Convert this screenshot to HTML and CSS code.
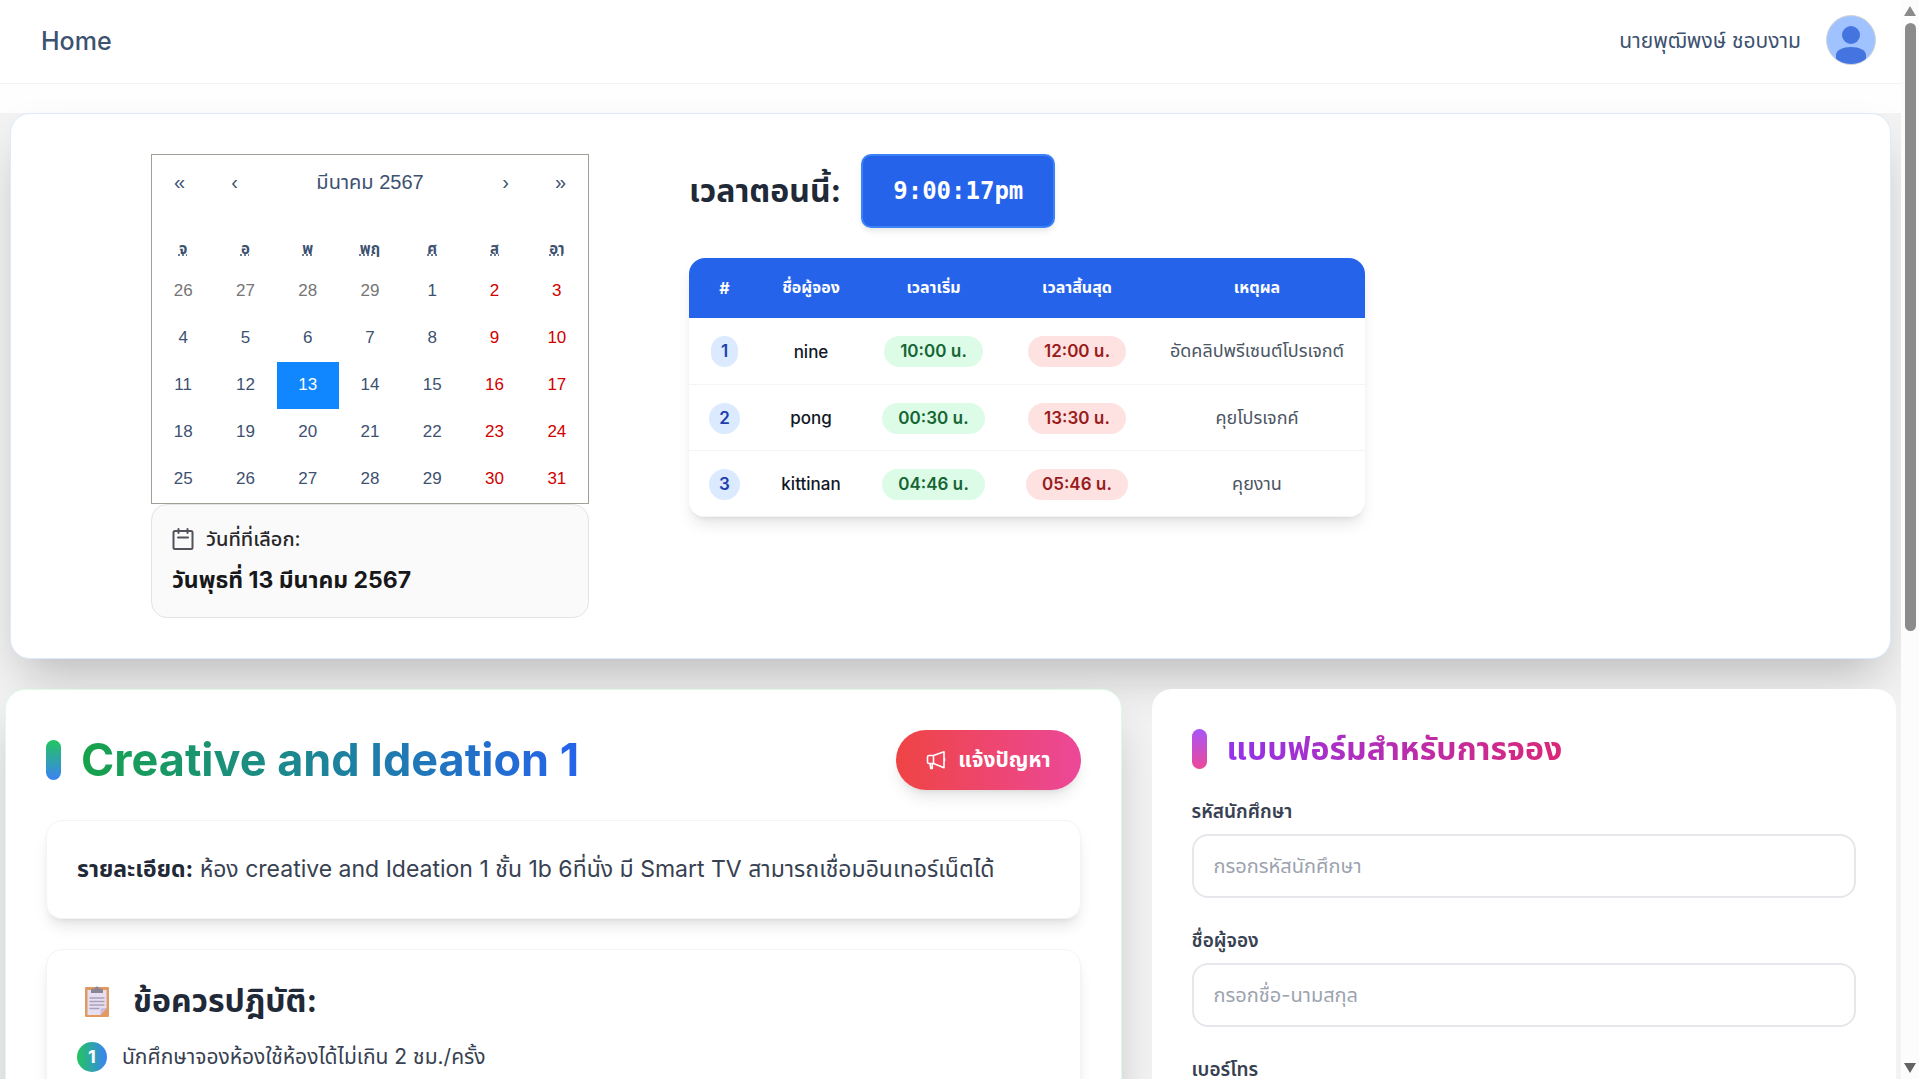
FILE: index.html
```html
<!DOCTYPE html>
<html lang="th">
<head>
<meta charset="utf-8">
<title>Home</title>
<link rel="stylesheet" href="styles.css">
</head>
<body>
<div class="page">
  <div class="top">
    <header class="topbar">
      <h1 class="topbar-title">Home</h1>
      <div class="user">
        <span class="user-name">นายพุฒิพงษ์ ชอบงาม</span>
        <svg class="avatar" viewBox="0 0 50 50" aria-hidden="true">
          <clipPath id="avatar-clip"><circle cx="25" cy="25" r="24"/></clipPath>
          <circle cx="25" cy="25" r="24.5" fill="#a0c3ff" stroke="#d4d4d4"/>
          <g fill="#4374e0" clip-path="url(#avatar-clip)">
            <circle cx="25" cy="20" r="9"/>
            <path d="M10 50V40c0-5 7-8 15-8s15 3 15 8v10z"/>
          </g>
        </svg>
      </div>
    </header>
  </div>

  <section class="schedule">
    <div class="date-col">
      <div class="calendar">
        <div class="cal-nav">
          <button type="button">«</button>
          <button type="button">‹</button>
          <button type="button" class="cal-label">มีนาคม 2567</button>
          <button type="button">›</button>
          <button type="button">»</button>
        </div>
        <table class="cal-grid">
          <thead><tr>
            <th><abbr title="วันจันทร์">จ</abbr></th><th><abbr title="วันอังคาร">อ</abbr></th><th><abbr title="วันพุธ">พ</abbr></th><th><abbr title="วันพฤหัสบดี">พฤ</abbr></th><th><abbr title="วันศุกร์">ศ</abbr></th><th><abbr title="วันเสาร์">ส</abbr></th><th><abbr title="วันอาทิตย์">อา</abbr></th>
          </tr></thead>
          <tbody>
            <tr><td class="other">26</td><td class="other">27</td><td class="other">28</td><td class="other">29</td><td>1</td><td class="weekend">2</td><td class="weekend">3</td></tr>
            <tr><td>4</td><td>5</td><td>6</td><td>7</td><td>8</td><td class="weekend">9</td><td class="weekend">10</td></tr>
            <tr><td>11</td><td>12</td><td class="active">13</td><td>14</td><td>15</td><td class="weekend">16</td><td class="weekend">17</td></tr>
            <tr><td>18</td><td>19</td><td>20</td><td>21</td><td>22</td><td class="weekend">23</td><td class="weekend">24</td></tr>
            <tr><td>25</td><td>26</td><td>27</td><td>28</td><td>29</td><td class="weekend">30</td><td class="weekend">31</td></tr>
          </tbody>
        </table>
      </div>
      <div class="selected">
        <p class="selected-label">
          <svg class="icon-cal" viewBox="0 0 22 22" fill="none" stroke="#52525b" stroke-width="2" stroke-linecap="round" stroke-linejoin="round" aria-hidden="true"><rect x="1.5" y="3" width="19" height="18" rx="1.5"/><path d="M6.500 1v4M15.500 1v4M6 9.500h10"/></svg>
          วันที่ที่เลือก:
        </p>
        <p class="selected-date">วันพุธที่ 13 มีนาคม 2567</p>
      </div>
    </div>

    <div class="time-col">
      <div class="clock">
        <span class="clock-label">เวลาตอนนี้:</span>
        <time class="clock-time">9:00:17pm</time>
      </div>
      <div class="bookings-wrap">
        <table class="bookings">
          <colgroup><col class="c-num"><col class="c-name"><col class="c-start"><col class="c-end"><col></colgroup>
          <thead><tr><th>#</th><th>ชื่อผู้จอง</th><th>เวลาเริ่ม</th><th>เวลาสิ้นสุด</th><th>เหตุผล</th></tr></thead>
          <tbody>
            <tr><td><span class="pill num">1</span></td><td class="name">nine</td><td><span class="pill start">10:00 น.</span></td><td><span class="pill end">12:00 น.</span></td><td class="reason">อัดคลิปพรีเซนต์โปรเจกต์</td></tr>
            <tr><td><span class="pill num">2</span></td><td class="name">pong</td><td><span class="pill start">00:30 น.</span></td><td><span class="pill end">13:30 น.</span></td><td class="reason">คุยโปรเจกค์</td></tr>
            <tr><td><span class="pill num">3</span></td><td class="name">kittinan</td><td><span class="pill start">04:46 น.</span></td><td><span class="pill end">05:46 น.</span></td><td class="reason">คุยงาน</td></tr>
          </tbody>
        </table>
      </div>
    </div>
  </section>

  <div class="columns">
    <section class="panel room">
      <div class="room-head">
        <h2 class="title room-title"><span class="bar bar-green"></span><span class="title-text grad-green">Creative and Ideation 1</span></h2>
        <button type="button" class="report">
          <svg class="icon-horn" viewBox="0 0 20 20" fill="none" stroke="#fff" stroke-width="1.600" stroke-linejoin="round" stroke-linecap="round" aria-hidden="true"><path d="M7.500 5.500v8H3a1.500 1.500 0 0 1-1.500-1.500V7A1.500 1.500 0 0 1 3 5.500zM7.500 5.500 18 1.800v16L7.500 13.500M4 13.500l.8 5h1.500v-5M18.500 8.500v2.500"/></svg>
          แจ้งปัญหา
        </button>
      </div>
      <div class="box">
        <p class="detail"><strong>รายละเอียด:</strong> ห้อง creative and Ideation 1 ชั้น 1b 6ที่นั่ง มี Smart TV สามารถเชื่อมอินเทอร์เน็ตได้</p>
      </div>
      <div class="box rules">
        <h3 class="rules-title">
          <svg class="icon-clip" viewBox="0 0 24 32" aria-hidden="true"><rect x="0" y="2" width="24" height="30" rx="1" fill="#e39a62"/><path d="M2.500 5h19v18l-6 7h-13z" fill="#e6dff0"/><path d="M21.500 23l-6 7v-5.500l1.500-1.500z" fill="#c9bdd9"/><path d="M6 8V5.500a2 2 0 0 1 2-2h2a2 2 0 0 1 4 0h2a2 2 0 0 1 2 2V8z" fill="#8b8494"/><path d="M4.500 13h15M4.500 16.500h15M4.500 20h15M4.500 23.500h10" stroke="#aaa0bb" stroke-width="1.300"/></svg>
          ข้อควรปฎิบัติ:
        </h3>
        <ol class="rules-list"><li><span class="step">1</span>นักศึกษาจองห้องใช้ห้องได้ไม่เกิน 2 ชม./ครั้ง</li></ol>
      </div>
    </section>

    <form class="panel booking">
      <h2 class="title form-title"><span class="bar bar-purple"></span><span class="title-text grad-purple">แบบฟอร์มสำหรับการจอง</span></h2>
      <div class="field"><label for="student">รหัสนักศึกษา</label><input id="student" type="text" placeholder="กรอกรหัสนักศึกษา"></div>
      <div class="field"><label for="fullname">ชื่อผู้จอง</label><input id="fullname" type="text" placeholder="กรอกชื่อ-นามสกุล"></div>
      <div class="field"><label for="phone">เบอร์โทร</label><input id="phone" type="tel" placeholder="กรอกเบอร์โทร"></div>
    </form>
  </div>
</div>
<div class="scrollbar" aria-hidden="true">
  <span class="arrow up"></span><span class="thumb"></span><span class="arrow down"></span>
</div>
</body>
</html>
```
FILE: styles.css
```css
* { box-sizing: border-box; }
body, h1, h2, h3, p, ol { margin: 0; padding: 0; }
button, input { font: inherit; color: inherit; }

body {
  display: grid;
  grid-template-columns: minmax(0, 1fr) 18px;
  height: 100vh;
  overflow: hidden;
  background: #f3f3f3;
  color: #3d5170;
  font-family: Inter, "Noto Sans Thai", "Noto Sans", sans-serif;
  font-size: 18px;
}

.page { height: 100vh; overflow: hidden; }

.top { padding-bottom: 29px; background: #fefefe; }
.topbar {
  display: flex;
  align-items: center;
  justify-content: space-between;
  height: 84px;
  padding: 0 25px 4px 41px;
  background: #fff;
  border-bottom: 1px solid #f3f3f3;
}
.topbar-title { padding-top: 3px; font-size: 25px; font-weight: 500; line-height: 32px; }
.user { display: flex; align-items: center; gap: 25px; }
.user-name { padding-top: 4px; font-size: 21px; }
.avatar { width: 50px; height: 50px; }

.schedule {
  position: relative;
  display: flex;
  gap: 100px;
  margin: 0 10px 30px;
  padding: 40px 40px 40px 140px;
  background: #fff;
  border: 1px solid #dbeafe;
  border-radius: 20px;
  box-shadow: 0 25px 50px -12px rgba(0, 0, 0, .25);
}
.date-col { width: 438px; }

.calendar {
  border: 1px solid #a0a096;
  font-family: "Liberation Sans", "Noto Sans Thai", sans-serif;
}
.cal-nav { display: flex; height: 55px; margin-bottom: 21px; }
.cal-nav button { width: 55px; padding: 0; border: 0; background: none; font-size: 20px; }
.cal-nav .cal-label { flex: 1; }
.cal-grid { width: 100%; border-collapse: collapse; table-layout: fixed; text-align: center; font-size: 17px; }
.cal-grid th { height: 37px; padding: 0; font-size: 15px; }
.cal-grid td { height: 47px; padding: 0 0 1px; }
.other { color: #757575; }
.weekend { color: #d10000; }
.active { background: #1087ff; color: #fff; }

.selected {
  padding: 21px 20px;
  background: #fafafa;
  border: 1px solid #e4e4e7;
  border-radius: 16px;
}
.selected-label { display: flex; align-items: center; gap: 12px; line-height: 26px; color: #27272a; font-size: 20px; font-weight: 500; }
.icon-cal { width: 22px; height: 22px; }
.selected-date { margin-top: 12px; font-size: 23px; line-height: 32px; font-weight: 700; color: #18181b; white-space: nowrap; }

.time-col { width: 676px; }
.clock { display: flex; align-items: center; gap: 20px; margin-bottom: 30px; }
.clock-label { font-size: 32px; line-height: 40px; font-weight: 700; color: #1f2937; }
.clock-time {
  padding: 18px 30px;
  background: #2563eb;
  border: 2px solid #3b82f6;
  border-radius: 10px;
  box-shadow: 0 4px 6px -1px rgba(0, 0, 0, .1);
  color: #fff;
  font: 700 24px/34px "DejaVu Sans Mono", monospace;
}
.bookings-wrap {
  overflow: hidden;
  border-radius: 16px;
  background: #fff;
  box-shadow: 0 10px 15px -3px rgba(0, 0, 0, .1), 0 4px 6px -4px rgba(0, 0, 0, .1);
}
.bookings { width: 100%; border-collapse: collapse; table-layout: fixed; text-align: center; font-size: 17px; }
.c-num { width: 71px; }
.c-name { width: 102px; }
.c-start { width: 143px; }
.c-end { width: 144px; }
.bookings th { height: 60px; padding: 0; background: #2563eb; color: #fff; font-size: 16px; }
.bookings td { height: 66px; padding: 2px 0 0; border-bottom: 1px solid #f3f4f6; white-space: nowrap; }
.name { color: #111827; font-weight: 500; }
.reason { color: #4b5563; font-size: 18px; }
.pill { display: inline-block; padding: 0 16px; border-radius: 16px; line-height: 31px; font-weight: 600; }
.pill.num { padding: 0 10px; background: #dbeafe; color: #1e40af; }
.pill.start { background: #dcfce7; color: #166534; }
.pill.end { background: #fee2e2; color: #991b1b; }

.columns { position: relative; display: grid; grid-template-columns: 3fr 2fr; gap: 30px; margin: 0 5px; }
.panel { padding: 40px; background: #fff; border-radius: 20px; }
.room { border: 1px solid #dcfce7; box-shadow: 0 25px 50px -12px rgba(0, 0, 0, .25); }
.title { display: flex; align-items: center; gap: 20px; }
.bar { width: 15px; height: 40px; border-radius: 8px; }
.bar-green { background: linear-gradient(#22c55e, #3b82f6); }
.bar-purple { background: linear-gradient(#a855f7, #ec4899); }
.title-text { background-clip: text; -webkit-background-clip: text; color: transparent; }
.grad-green { background-image: linear-gradient(90deg, #16a34a, #2563eb); }
.grad-purple { background-image: linear-gradient(90deg, #9333ea, #db2777); }
.room-head { display: flex; align-items: center; justify-content: space-between; margin-bottom: 30px; }
.room-title { font-size: 45px; line-height: 60px; }
.form-title { font-size: 32px; line-height: 40px; margin-bottom: 30px; }
.report {
  display: flex;
  align-items: center;
  gap: 12px;
  height: 60px;
  padding: 0 30px;
  border: 0;
  border-radius: 30px;
  background: linear-gradient(90deg, #ef4444, #ec4899);
  box-shadow: 0 10px 15px -3px rgba(0, 0, 0, .1), 0 4px 6px -4px rgba(0, 0, 0, .1);
  color: #fff;
  font-size: 21px;
  font-weight: 700;
}
.icon-horn { width: 20px; height: 20px; }
.box {
  padding: 30px;
  border: 1px solid #f3f4f6;
  border-radius: 16px;
  box-shadow: 0 10px 15px -3px rgba(0, 0, 0, .1), 0 4px 6px -4px rgba(0, 0, 0, .1);
  color: #374151;
}
.box + .box { margin-top: 30px; }
.detail { font-size: 23px; line-height: 37px; }
.detail strong { color: #1f2937; }
.rules-title { display: flex; align-items: center; gap: 24px; padding-left: 8px; font-size: 32px; line-height: 42px; color: #1f2937; }
.icon-clip { width: 24px; height: 32px; }
.rules-list { margin-top: 20px; list-style: none; font-size: 21px; }
.rules-list li { display: flex; align-items: center; gap: 15px; line-height: 30px; }
.step { width: 30px; border-radius: 50%; background: linear-gradient(90deg, #22c55e, #3b82f6); color: #fff; font-size: 18px; font-weight: 700; text-align: center; }

.field { margin-bottom: 30px; }
.field label { display: block; margin-bottom: 10px; line-height: 25px; font-size: 19px; font-weight: 600; color: #374151; }
.field input { display: block; width: 100%; height: 64px; padding: 0 20px; border: 2px solid #e5e7eb; border-radius: 16px; background: #fff; font-size: 20px; }
.field input::placeholder { color: #9ca3af; opacity: 1; }

.scrollbar { display: flex; flex-direction: column; align-items: center; padding: 6px 0; background: #fcfcfc; }
.arrow { width: 12px; height: 10px; background: #8b8b8b; clip-path: polygon(50% 0, 100% 100%, 0 100%); }
.arrow.down { margin-top: auto; background: #636363; clip-path: polygon(0 0, 100% 0, 50% 100%); }
.thumb { width: 11px; height: 57%; margin-top: 7px; border-radius: 6px; background: #8b8b8b; }
```
